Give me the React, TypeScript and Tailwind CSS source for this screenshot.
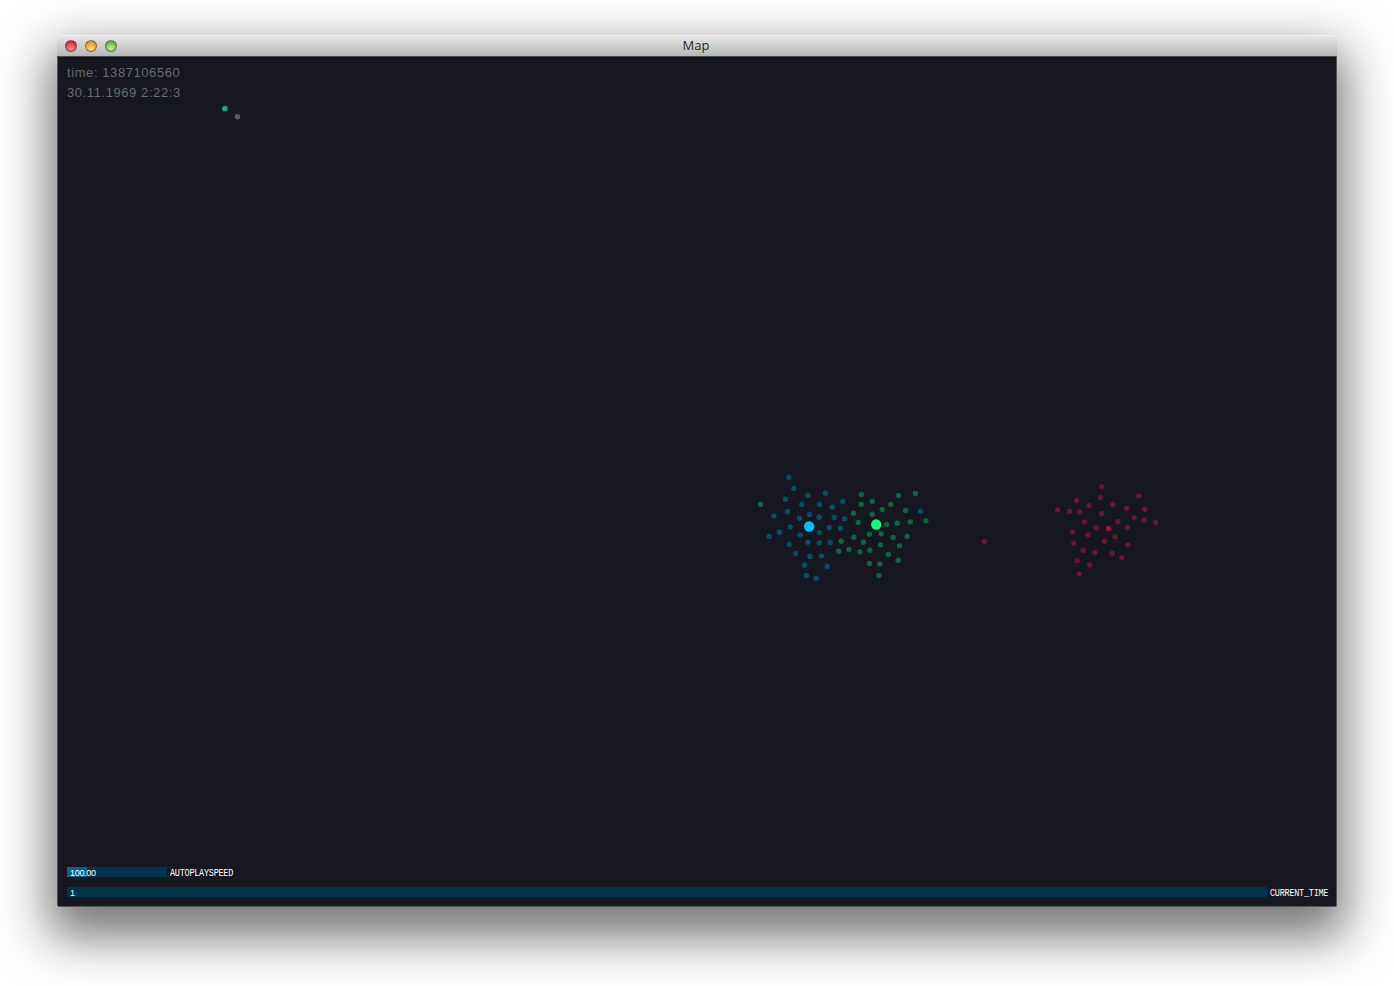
const BLUE_ORIGIN = [750, 465];
const blue = [[116,37],[131,70],[173,91],[226,84],[106,102],[155,118],[208,118],[246,126],[278,109],[112,139],[71,152],[148,159],[178,148],[207,156],[252,157],[283,161],[120,185],[237,187],[271,189],[88,201],[57,214],[150,209],[208,202],[117,237],[173,231],[207,233],[240,232],[136,265],[179,274],[214,272],[163,300],[231,304],[169,331],[198,339],[511,138]];
const green = [[31,118],[334,88],[333,118],[366,109],[445,91],[496,85],[422,118],[396,133],[466,136],[310,144],[366,147],[324,172],[409,178],[441,174],[480,170],[527,167],[358,207],[393,206],[311,216],[429,217],[471,214],[273,228],[340,231],[391,239],[448,242],[266,258],[296,253],[329,260],[359,255],[415,268],[444,285],[358,295],[389,296],[386,331]];
const RED_ORIGIN = [970, 475];
const red = [[43,199],[395,35],[391,67],[506,62],[319,76],[356,91],[428,88],[262,104],[298,108],[329,110],[394,115],[469,100],[524,102],[492,128],[521,135],[556,142],[343,140],[443,139],[378,158],[472,157],[307,170],[354,179],[435,185],[403,198],[311,204],[473,209],[339,226],[374,232],[426,234],[455,248],[321,257],[358,269],[327,296]];

// Canvas coordinates: the canvas's padding box starts at page (58, 57)
const cx = (o: number[], x: number) => o[0] + x / 3 - 58 + 0.2;
const cy = (o: number[], y: number) => o[1] + y / 3 - 57 + 0.2;

function MapDots() {
  return (
    <svg className="absolute inset-0 w-full h-full" viewBox="0 0 1278 849">
      {blue.map((p, i) => <circle key={`b${i}`} cx={cx(BLUE_ORIGIN, p[0])} cy={cy(BLUE_ORIGIN, p[1])} r="2.7" fill="#0c4c67" />)}
      {green.map((p, i) => <circle key={`g${i}`} cx={cx(BLUE_ORIGIN, p[0])} cy={cy(BLUE_ORIGIN, p[1])} r="2.7" fill="#13643d" />)}
      {red.map((p, i) => <circle key={`r${i}`} cx={cx(RED_ORIGIN, p[0])} cy={cy(RED_ORIGIN, p[1])} r="2.7" fill="#67192d" />)}
      <circle cx={cx(RED_ORIGIN, 415)} cy={cy(RED_ORIGIN, 160)} r="2.7" fill="#9c1830" />
      <circle cx={cx(BLUE_ORIGIN, 177)} cy={cy(BLUE_ORIGIN, 184)} r="5.2" fill="#00bfff" />
      <circle cx={cx(BLUE_ORIGIN, 378)} cy={cy(BLUE_ORIGIN, 178)} r="5.2" fill="#1cf56e" />
      <circle cx="167.2" cy="51.7" r="3.2" fill="#1a5566" />
      <circle cx="166.6" cy="51.7" r="2.4" fill="#2ea98e" />
      <circle cx="179.5" cy="59.7" r="2.7" fill="#5a5b62" />
    </svg>
  );
}

function Light({ className }: { className: string }) {
  return <div className={`w-3 h-3 rounded-full border border-[rgba(60,60,60,0.55)] ${className}`} />;
}

function Slider({ value, label, barClass, fillClass }: { value: string; label: string; barClass: string; fillClass: string }) {
  return (
    <div className="flex items-center h-2.5">
      <div className={`relative h-2.5 bg-[#03344e] ${barClass}`}>
        <div className={`h-full bg-[#07658f] ${fillClass}`} />
        <span className="absolute left-[3px] top-[0.5px] leading-[10px] text-[9px] tracking-[-0.3px] text-white origin-center scale-y-110 font-['Liberation_Sans',sans-serif]">{value}</span>
      </div>
      <span className="relative top-[1px] inline-block ml-[3px] leading-[10px] text-[8.5px] tracking-[-0.25px] text-white origin-center scale-y-125 font-['Liberation_Mono',monospace]">{label}</span>
    </div>
  );
}

export default function App() {
  return (
    <div className="h-[986px] bg-white pt-[35px] px-[57px] overflow-hidden">
      <div className="h-[872px] flex flex-col rounded-t-[5px] shadow-[0_22px_50px_8px_rgba(0,0,0,0.55)]">
        <div className="h-[22px] flex items-center relative rounded-t-[5px] border-t border-[#f0f0f0] border-b border-b-[#4a4a4a] bg-gradient-to-b from-[#e6e6e6] to-[#b6b6b6] shrink-0">
          <div className="flex gap-2 ml-2">
            <Light className="bg-[radial-gradient(circle_at_50%_75%,#ff9a9a,#e8303c_60%,#b01a24)]" />
            <Light className="bg-[radial-gradient(circle_at_50%_75%,#ffd78a,#f0a030_60%,#b87818)]" />
            <Light className="bg-[radial-gradient(circle_at_50%_75%,#c8eea0,#70c050_60%,#4a8f30)]" />
          </div>
          <span className="absolute inset-x-0 pr-[2px] text-center text-[13px] text-[#2a2a2a] font-['Open_Sans',sans-serif]">Map</span>
        </div>
        <div className="relative flex-1 flex flex-col justify-between bg-[#161720] border-x border-b border-[#555555] rounded-b-[2px] pl-[9px] pb-[9px]">
          <MapDots />
          <div className="relative pt-[6px] text-[13px] leading-5 tracking-[0.58px] text-[#6a6b70] font-['Liberation_Sans',sans-serif]">
            <div>time: 1387106560</div>
            <div>30.11.1969 2:22:3</div>
          </div>
          <div className="relative flex flex-col gap-2.5">
            <Slider value="100.00" label="AUTOPLAYSPEED" barClass="w-[100px]" fillClass="w-5" />
            <Slider value="1" label="CURRENT_TIME" barClass="w-[1200px]" fillClass="w-0" />
          </div>
        </div>
      </div>
    </div>
  );
}
